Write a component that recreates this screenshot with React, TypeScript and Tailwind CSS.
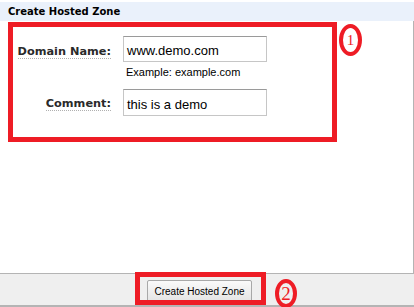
export default function App() {
  return (
    <div className="w-[414px] h-[307px] bg-white flex flex-col overflow-hidden font-['Liberation_Sans',Arial,sans-serif] text-black">
      <div className="mt-[2px] h-[19px] bg-[#eaf1fb] flex items-center pl-[8px] font-['DejaVu_Sans',Verdana,sans-serif] text-[10px] font-bold">
        Create Hosted Zone
      </div>

      <div className="h-[252px] border-r border-[#b4b4b4] flex items-start">
        <div className="ml-[8px] mt-[1px] w-[329px] h-[120px] border-[5px] border-[#ee1c25] pt-[9px]">
          <div className="flex items-start gap-[12px]">
            <div className="w-[98px] mt-[2px] text-right">
              <span className="inline-block leading-[13px] border-b border-dotted border-[#b0b0b0] font-['DejaVu_Sans',Verdana,sans-serif] text-[11.3px] font-bold text-[#2a2a2a]">
                Domain Name:
              </span>
            </div>
            <div className="flex flex-col">
              <div className="w-[144px] h-[26px] border border-[#c6c6c6] border-t-[#9a9a9a] flex items-center pl-[3px] pt-[3px] text-[13px] leading-[15px]">
                www.demo.com
              </div>
              <div className="mt-[4px] pl-[3px] text-[11px] leading-[13px]">Example: example.com</div>
            </div>
          </div>
          <div className="flex items-start gap-[12px] mt-[10px]">
            <div className="w-[98px] mt-[1px] text-right">
              <span className="inline-block leading-[13px] border-b border-dotted border-[#b0b0b0] font-['DejaVu_Sans',Verdana,sans-serif] text-[11.3px] font-bold text-[#2a2a2a]">
                Comment:
              </span>
            </div>
            <div className="w-[144px] h-[27px] border border-[#c6c6c6] border-t-[#9a9a9a] flex items-center pl-[3px] pt-[3px] text-[13px] leading-[15px]">
              this is a demo
            </div>
          </div>
        </div>
        <div className="ml-[2px] mt-[3px] w-[23px] h-[32px] rounded-[50%] border-[4px] border-[#ee1c25] flex items-center justify-center font-['Liberation_Serif',serif] text-[15px] leading-none text-[#ee1c25]">
          1
        </div>
      </div>

      <div className="h-[34px] border-t border-b-2 border-[#b4b4b4] bg-[#efefef] pl-[147px] pt-[4px]">
        <div className="relative w-[105px]">
          <button className="w-[105px] h-[24px] border border-[#a8a8a8] rounded-[2px] bg-gradient-to-b from-[#fafafa] to-[#e2e2e2] text-[10px] leading-none text-black">
            Create Hosted Zone
          </button>
          <div className="absolute left-[-12px] top-[-6px] w-[131px] h-[33px] border-[5px] border-[#ee1c25]" />
          <div className="absolute left-[128px] top-[1px] w-[22px] h-[29px] rounded-[50%] border-[4px] border-[#ee1c25] flex items-center justify-center font-['Liberation_Serif',serif] text-[19px] leading-none text-[#ee1c25]">
            2
          </div>
        </div>
      </div>
    </div>
  );
}
